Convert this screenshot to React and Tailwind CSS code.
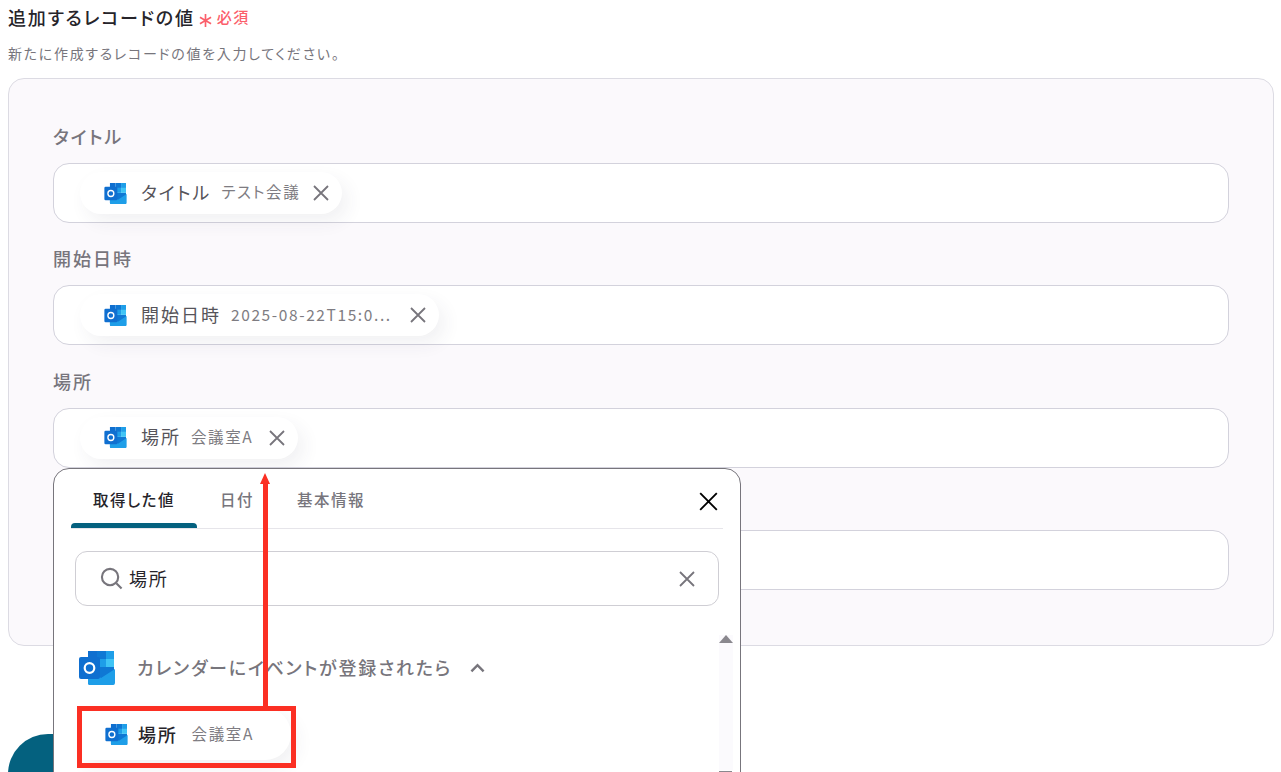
const font = { fontFamily: '"Noto Sans CJK JP", "Noto Sans", sans-serif' };

function OutlookIcon({ className }) {
  return (
    <svg viewBox="0 0 36 34" className={className}>
      <rect x="9" y="0" width="9" height="8" fill="#0f6fd0" />
      <rect x="18" y="0" width="9" height="8" fill="#0f78d4" />
      <rect x="27" y="0" width="8" height="8" fill="#1e9ee8" />
      <rect x="9" y="8" width="9" height="8" fill="#0f78d4" />
      <rect x="18" y="8" width="9" height="8" fill="#1e9ee8" />
      <rect x="27" y="8" width="8" height="8" fill="#3fc4f5" />
      <path d="M9 16h26v16a2 2 0 0 1-2 2H11a2 2 0 0 1-2-2z" fill="#0f78d4" />
      <path d="M9 18l13 9 14-9v14a2 2 0 0 1-2 2H11a2 2 0 0 1-2-2z" fill="#1e9ee8" />
      <rect x="0" y="6" width="21" height="22" rx="2" fill="#0f6fd0" />
      <circle cx="10.5" cy="17" r="4.8" fill="none" stroke="#fff" strokeWidth="2.2" />
    </svg>
  );
}

function CrossIcon({ className, stroke = '#77757c', width = 1.8 }) {
  return (
    <svg viewBox="0 0 16 16" className={className} fill="none" stroke={stroke} strokeWidth={width}>
      <path d="M1 1l14 14M15 1L1 15" />
    </svg>
  );
}

function Chip({ label, value, closeClass = 'ml-[13px]' }) {
  return (
    <div className="inline-flex h-[42px] items-center rounded-full bg-white pl-[24px] pr-[13px] shadow-[6px_8px_18px_rgba(60,50,90,0.07)]">
      <OutlookIcon className="h-[21px] w-[23px]" />
      <span className="ml-[14px] -mt-[2px] text-[18px] tracking-[2px] text-[#56545a]">{label}</span>
      <span className="ml-[10px] -mt-[2px] text-[15.5px] tracking-[1.6px] text-[#7e7c82]">{value}</span>
      <CrossIcon className={`${closeClass} h-[16px] w-[16px]`} />
    </div>
  );
}

function Field({ label, children }) {
  return (
    <div className="mb-[24.33px]">
      <div className="mb-[16px] h-[22px] text-[18px] leading-[22px] font-medium tracking-[2px] text-[#77757c]">{label}</div>
      <div className="flex h-[60px] items-center rounded-[16px] border border-[#d3d2dc] bg-white pl-[26px]">
        {children}
      </div>
    </div>
  );
}

export default function App() {
  return (
    <div className="relative h-[772px] w-[1281px] overflow-hidden bg-white [font-feature-settings:'palt']" style={font}>
      <div className="px-[8px]">
        {/* Header */}
        <div className="flex h-[34px] items-center">
          <h2 className="text-[18px] font-medium tracking-[1.8px] text-[#26242a]">追加するレコードの値</h2>
          <svg viewBox="0 0 14 14" className="ml-[4px] mt-[6px] h-[13px] w-[13px]" fill="none" stroke="#fb5f6b" strokeWidth="1.8">
            <path d="M7 0v14M1 3.5l12 7M13 3.5l-12 7" />
          </svg>
          <span className="ml-[5px] text-[15px] font-medium tracking-[1.5px] text-[#fb5f6b]">必須</span>
        </div>
        <p className="mt-[9px] text-[14px] leading-[20px] tracking-[1.7px] text-[#77757c]">新たに作成するレコードの値を入力してください。</p>

        {/* Panel */}
        <div className="mt-[15px] h-[568px] w-[1266px] rounded-[16px] border border-[#dcdbe3] bg-[#fbf9fc] px-[44px] pt-[46px]">
          <Field label="タイトル">
            <Chip label="タイトル" value="テスト会議" />
          </Field>
          <Field label="開始日時">
            <Chip label="開始日時" value="2025-08-22T15:0..." closeClass="ml-[18px]" />
          </Field>
          <Field label="場所">
            <Chip label="場所" value="会議室A" closeClass="ml-[16px]" />
          </Field>
          <Field label="">
            <span />
          </Field>
        </div>
      </div>

      {/* Button behind the popup */}
      <div className="absolute left-[8px] top-[734px] h-[80px] w-[200px] rounded-[40px] bg-[#04617f]" />

      {/* Popup */}
      <div className="absolute left-[53px] top-[468px] h-[340px] w-[688px] rounded-[16px] border border-[#77757c] bg-white">
        <div className="relative mx-[17px] flex h-[60px] border-b border-[#e6e5ea]">
          <div className="relative flex w-[126px] items-center justify-center pt-[2px] text-[15.5px] font-medium tracking-[1.5px] text-[#26242a]">
            取得した値
            <div className="absolute bottom-0 left-0 h-[5px] w-[126px] rounded-t-[4px] bg-[#04617f]" />
          </div>
          <div className="ml-[23px] flex items-center pt-[2px] text-[15.5px] font-medium tracking-[1.5px] text-[#77757c]">日付</div>
          <div className="ml-[43px] flex items-center pt-[2px] text-[15.5px] font-medium tracking-[1.5px] text-[#77757c]">基本情報</div>
          <CrossIcon className="absolute right-[5px] top-[23px] h-[19px] w-[19px]" stroke="#000" width={1.6} />
        </div>

        <div className="mx-[21px] mt-[22px] flex h-[55px] items-center rounded-[12px] border border-[#cfced4] pl-[24px] pr-[23px]">
          <svg viewBox="0 0 24 24" className="h-[23px] w-[23px]" fill="none" stroke="#77757c" strokeWidth="2.2">
            <circle cx="10.5" cy="10.5" r="8.5" />
            <path d="M17 17l5.5 5.5" />
          </svg>
          <span className="ml-[6px] text-[18px] tracking-[1.8px] text-[#26242a]">場所</span>
          <CrossIcon className="ml-auto h-[16px] w-[16px]" />
        </div>

        <div className="ml-[25px] mt-[44px] flex h-[36px] items-center">
          <OutlookIcon className="h-[34px] w-[36px]" />
          <span className="ml-[22px] -mt-[2px] text-[18px] font-medium tracking-[1.8px] text-[#77757c]">カレンダーにイベントが登録されたら</span>
          <svg viewBox="0 0 16 10" className="ml-[18px] h-[10px] w-[15px]" fill="none" stroke="#77757c" strokeWidth="2.6">
            <path d="M1.5 8.5L8 2l6.5 6.5" />
          </svg>
        </div>

        <div className="ml-[27px] mt-[22px] flex h-[52px] w-[210px] items-center rounded-r-full bg-white pl-[24px] shadow-[6px_8px_18px_rgba(60,50,90,0.07)]">
          <OutlookIcon className="h-[21px] w-[23px]" />
          <span className="ml-[10px] text-[18px] font-medium tracking-[1.8px] text-[#26242a]">場所</span>
          <span className="ml-[14px] text-[15.5px] tracking-[1.6px] text-[#7e7c82]">会議室A</span>
        </div>

        {/* Scrollbar */}
        <div className="absolute left-[665px] top-[166px] h-[135px] w-[14px] bg-[#fbfafd]">
          <div className="mx-auto h-0 w-0 border-x-[7px] border-b-[8px] border-x-transparent border-b-[#8a888e]" />
        </div>
        <div className="absolute left-[665px] top-[302px] h-[1px] w-[13px] bg-[#8a888e]" />
      </div>

      {/* Red annotation */}
      <div className="absolute left-[263px] top-[482px] h-[226px] w-[5px] bg-[#fb2f23]" />
      <div className="absolute left-[260px] top-[473px] h-0 w-0 border-x-[5.5px] border-b-[11px] border-x-transparent border-b-[#fb2f23]" />
      <div className="absolute left-[77px] top-[706px] h-[62px] w-[219px] border-[5px] border-[#fb2f23]" />
    </div>
  );
}
